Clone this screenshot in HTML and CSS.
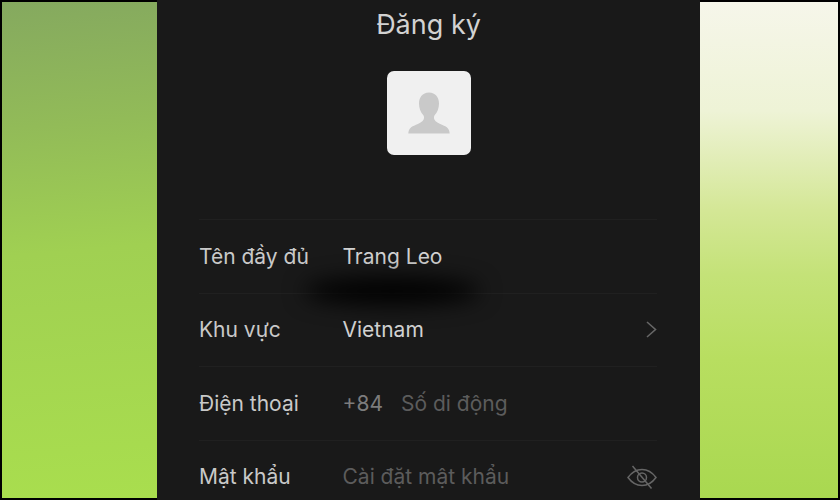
FILE: index.html
```html
<!DOCTYPE html>
<html lang="vi">

<head>
    <meta charset="UTF-8">
    <meta name="viewport" content="width=device-width, initial-scale=1.0">
    <link rel="stylesheet" href="styles.css">
    <title>Đăng ký</title>
</head>

<body>
    <div class="nenTrai"></div>
    <main class="dienThoai">
        <h1>Đăng ký</h1>
        <div class="anhDaiDien">
            <svg width="42" height="42" viewBox="0 0 42 42">
                <path d="M21 0.5c-6.6 0-10 5-10 11 0 4.6 1.6 8.8 4.2 11.4 1 1 1.1 3.2 0.3 4.8-1.1 2.2-4 3.6-8 5.2-4.2 1.700-6.800 3.500-7.200 8.600h41.400c-0.400-5.100-3-6.900-7.200-8.600-4-1.600-6.900-3-8-5.200-0.800-1.600-0.700-3.800 0.300-4.800 2.600-2.600 4.200-6.800 4.200-11.400 0-6-3.400-11-10-11z" fill="#c9c9c9"/>
            </svg>
        </div>
        <div class="vetDen"></div>
        <section class="bieuMau">
            <div class="dong">
                <span class="nhan">Tên đầy đủ</span>
                <span class="giaTri">Trang Leo</span>
            </div>
            <div class="dong">
                <span class="nhan">Khu vực</span>
                <span class="giaTri">Vietnam</span>
                <svg class="muiTen" width="11" height="17" viewBox="0 0 11 17">
                    <path d="M1 1l8.500 7.500L1 16" fill="none" stroke="#666" stroke-width="1.600"/>
                </svg>
            </div>
            <div class="dong">
                <span class="nhan">Điện thoại</span>
                <span class="maVung">+84</span>
                <span class="goiY">Số di động</span>
            </div>
            <div class="dong">
                <span class="nhan">Mật khẩu</span>
                <span class="goiY">Cài đặt mật khẩu</span>
                <svg class="mat" width="30" height="24" viewBox="0 0 30 24">
                    <g fill="none" stroke="#666" stroke-width="1.500">
                        <path d="M1 12.500C5 7 9.500 4.500 15 4.500s10 2.500 14 8c-4 5.500-8.500 8-14 8s-10-2.500-14-8z"/>
                        <circle cx="15" cy="12.500" r="4.500"/>
                        <path d="M5.500 1L24.500 23.500"/>
                    </g>
                </svg>
            </div>
        </section>
    </main>
    <div class="nenPhai"></div>
</body>

</html>
```

FILE: styles.css
```css
html,
body,
h1 {
    margin: 0;
    padding: 0;
}

body {
    display: flex;
    width: 840px;
    height: 500px;
    box-sizing: border-box;
    padding: 0 2px;
    overflow: hidden;
    background-color: #000;
    font-family: 'Inter', 'Noto Sans', sans-serif;
}

.nenTrai {
    width: 155px;
    margin: 2px 0;
    background: linear-gradient(175deg, #85a95f 0%, #92bb58 25%, #a0d052 50%, #a9de4e 100%);
}

.nenPhai {
    width: 138px;
    margin: 2px 0;
    background: linear-gradient(180deg, #f6f6ea 0%, #eef3d6 22%, #d4e796 42%, #c4e278 55%, #b8de60 72%, #a9d850 100%);
}

.dienThoai {
    position: relative;
    width: 543px;
    height: 500px;
    flex-shrink: 0;
    background-color: #191919;
    display: flex;
    flex-direction: column;
    align-items: flex-start;
    overflow: hidden;
}

h1 {
    align-self: center;
    margin-top: 8px;
    font-size: 27px;
    line-height: 34px;
    font-weight: 400;
    color: #d2d2d2;
}

.anhDaiDien {
    align-self: center;
    margin-top: 29px;
    width: 84px;
    height: 84px;
    flex-shrink: 0;
    border-radius: 7px;
    background-color: #f0f0f0;
    display: flex;
    justify-content: center;
    align-items: center;
}

.vetDen {
    position: absolute;
    left: 147px;
    top: 278px;
    width: 176px;
    height: 26px;
    border-radius: 50%;
    background-color: #000;
    filter: blur(11px);
}

.bieuMau {
    margin-top: 64px;
    margin-left: 42px;
    width: 458px;
}

.dong {
    display: flex;
    align-items: center;
    height: 72.500px;
    border-top: 1px solid #202020;
    font-size: 21px;
}

.nhan {
    width: 143.500px;
    color: #c9c9c9;
}

.giaTri {
    color: #d2d2d2;
}

.maVung {
    margin-right: 18px;
    color: #7c7c7c;
}

.goiY {
    color: #5c5c5c;
}

.muiTen,
.mat {
    margin-left: auto;
}
```
